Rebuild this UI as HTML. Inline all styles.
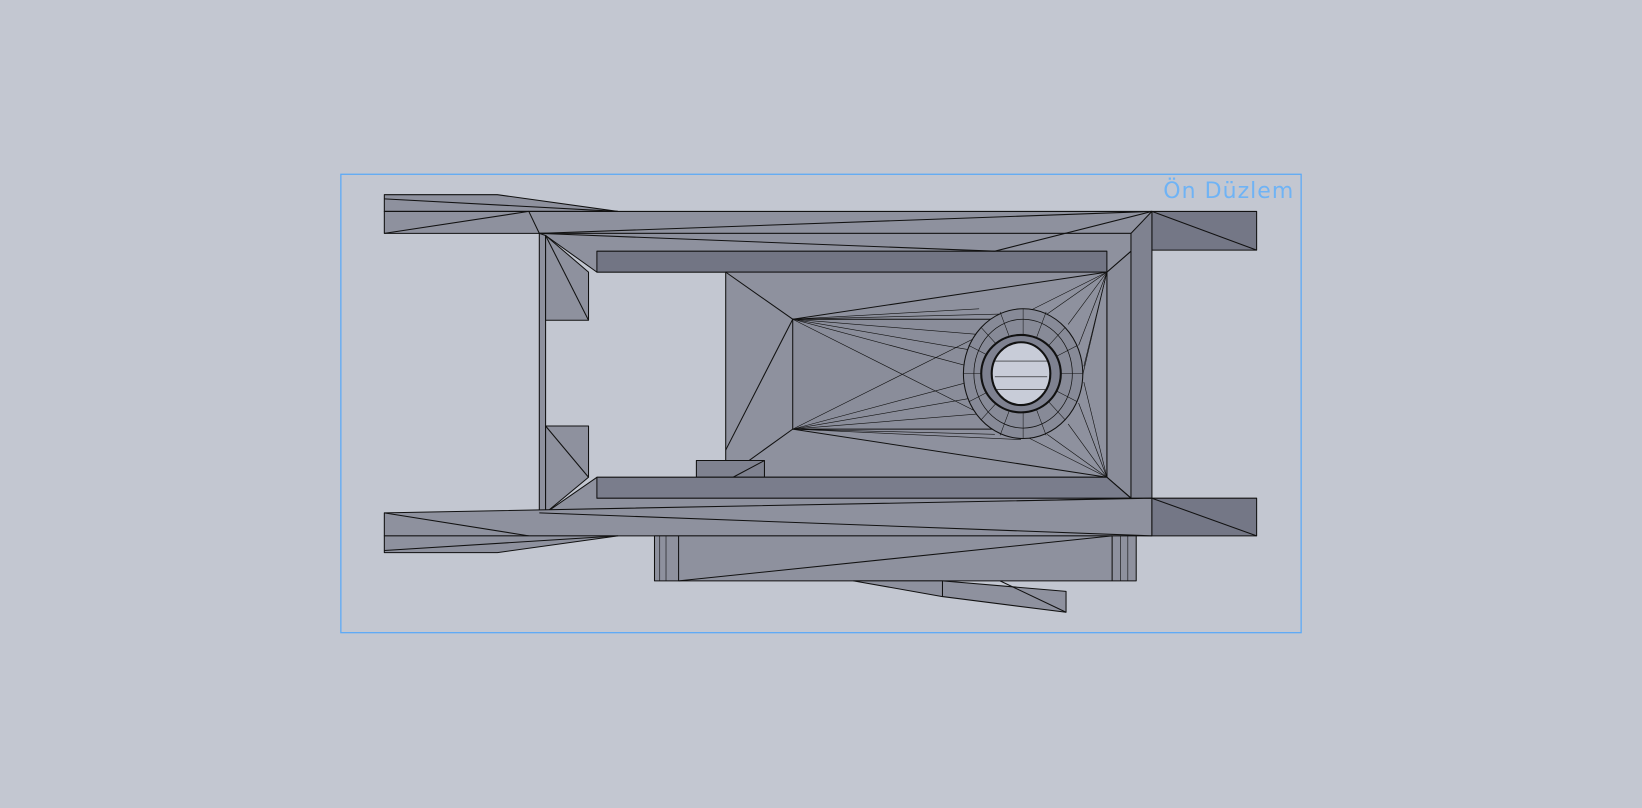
<!DOCTYPE html>
<html><head><meta charset="utf-8"><style>
html,body{margin:0;padding:0;background:#c3c7d1;overflow:hidden}
svg{display:block}
</style></head><body>
<svg width="1642" height="808" viewBox="0 0 1568 772" preserveAspectRatio="none" xmlns="http://www.w3.org/2000/svg">
<rect width="1568" height="772" fill="#c3c7d1"/>
<g stroke="#111" stroke-width="1" stroke-linejoin="round">
<polygon points="367,186 475,186 590,202 367,202" fill="#8e919e"/>
<line x1="367" y1="190" x2="590" y2="202"/>
<polygon points="367,202 1100,202 1100,223 367,223" fill="#8e919e"/>
<polygon points="1100,202 1200,202 1200,239 1100,239" fill="#747786"/>
<line x1="1100" y1="202" x2="1200" y2="239"/>
<line x1="367" y1="223" x2="505" y2="202"/>
<polygon points="1080,223 1100,202 1100,476 1080,476" fill="#7f8290"/>
<polygon points="1057,260 1080,240 1080,476 1057,456" fill="#8a8d9a"/>
<polygon points="515,223 521,223 521,490 515,490" fill="#8e919e"/>
<polygon points="515,223 1080,223 1080,240 1057,260 570,260 521,225" fill="#8e919e"/>
<polygon points="570,240 1057,240 1057,260 570,260" fill="#727584"/>
<line x1="515" y1="223" x2="950" y2="240"/>
<line x1="950" y1="240" x2="1100" y2="202"/>
<line x1="505" y1="202" x2="515" y2="223"/>
<line x1="515" y1="223" x2="1100" y2="202"/>
<polygon points="521,225 562,260 562,306 521,306" fill="#8e919e"/>
<line x1="521" y1="225" x2="562" y2="306"/>
<polygon points="521,407 562,407 562,456 521,490" fill="#8e919e"/>
<line x1="521" y1="407" x2="562" y2="456"/>
<polygon points="693,260 1057,260 1057,456 693,456" fill="#8e919e"/>
<polygon points="757,305 985,305 985,410 757,410" fill="#8a8d9a"/>
<line x1="693" y1="260" x2="757" y2="305"/>
<line x1="693" y1="430" x2="757" y2="305"/>
<line x1="693" y1="456" x2="757" y2="410"/>
<line x1="757" y1="305" x2="1057" y2="260"/>
<line x1="757" y1="410" x2="1057" y2="456"/>
<g stroke-width="0.6">
<line x1="757" y1="305" x2="940" y2="320"/><line x1="757" y1="305" x2="930" y2="335"/><line x1="757" y1="305" x2="925" y2="350"/>
<line x1="757" y1="305" x2="935" y2="295"/><line x1="757" y1="305" x2="960" y2="300"/>
<line x1="757" y1="410" x2="940" y2="395"/><line x1="757" y1="410" x2="930" y2="380"/><line x1="757" y1="410" x2="925" y2="365"/>
<line x1="757" y1="410" x2="950" y2="415"/><line x1="757" y1="410" x2="975" y2="420"/>
<line x1="1057" y1="260" x2="1000" y2="300"/><line x1="1057" y1="260" x2="1020" y2="310"/><line x1="1057" y1="260" x2="1030" y2="330"/><line x1="1057" y1="260" x2="1035" y2="350"/><line x1="1057" y1="260" x2="1030" y2="375"/>
<line x1="1057" y1="456" x2="1000" y2="415"/><line x1="1057" y1="456" x2="1020" y2="405"/><line x1="1057" y1="456" x2="1030" y2="385"/><line x1="1057" y1="456" x2="1035" y2="365"/>
<line x1="757" y1="305" x2="1057" y2="456"/><line x1="757" y1="410" x2="1057" y2="260"/>
</g>
<ellipse cx="977" cy="357" rx="57" ry="62" fill="#878a97"/>
<ellipse cx="977" cy="357" rx="47" ry="52" fill="none" stroke-width="0.7"/>
<g stroke-width="0.5">
<line x1="920" y1="357" x2="1034" y2="357"/><line x1="977" y1="295" x2="977" y2="419"/>
<line x1="937" y1="313" x2="1017" y2="401"/><line x1="1017" y1="313" x2="937" y2="401"/>
<line x1="925" y1="330" x2="1029" y2="384"/><line x1="1029" y1="330" x2="925" y2="384"/>
<line x1="955" y1="298" x2="999" y2="416"/><line x1="999" y1="298" x2="955" y2="416"/>
</g>
<ellipse cx="975" cy="357" rx="38" ry="37" fill="#7e8190" stroke-width="2"/>
<ellipse cx="975" cy="357" rx="28" ry="30" fill="#c8ccd8" stroke-width="2"/>
<line x1="950" y1="345" x2="1000" y2="345" stroke-width="0.6"/>
<line x1="950" y1="360" x2="1000" y2="360" stroke-width="0.6"/>
<line x1="952" y1="372" x2="998" y2="372" stroke-width="0.6"/>
<polygon points="665,440 730,440 730,456 665,456" fill="#7f8290"/>
<line x1="700" y1="456" x2="730" y2="440"/>
<polygon points="521,490 570,456 1057,456 1080,476 1080,490" fill="#8e919e"/>
<polygon points="570,456 1057,456 1080,476 570,476" fill="#7a7d8c"/>
<line x1="515" y1="490" x2="1080" y2="476"/>
<polygon points="367,490 1100,476 1100,512 367,512" fill="#8e919e"/>
<polygon points="1100,476 1200,476 1200,512 1100,512" fill="#747786"/>
<line x1="1100" y1="476" x2="1200" y2="512"/>
<line x1="367" y1="490" x2="505" y2="512"/>
<line x1="515" y1="490" x2="1100" y2="512"/>
<polygon points="367,512 590,512 475,528 367,528" fill="#8e919e"/>
<line x1="367" y1="526" x2="590" y2="512"/>
<polygon points="625,512 1085,512 1085,555 625,555" fill="#8e919e"/>
<line x1="648" y1="512" x2="648" y2="555"/>
<line x1="1062" y1="512" x2="1062" y2="555"/>
<line x1="648" y1="555" x2="1062" y2="512"/>
<g stroke-width="0.6"><line x1="630" y1="512" x2="630" y2="555"/><line x1="636" y1="512" x2="636" y2="555"/><line x1="1070" y1="512" x2="1070" y2="555"/><line x1="1077" y1="512" x2="1077" y2="555"/></g>
<polygon points="815,555 900,555 1018,565 1018,585 900,570" fill="#8e919e"/>
<line x1="900" y1="555" x2="900" y2="570"/>
<line x1="955" y1="555" x2="1018" y2="585"/>
</g>
<rect x="325.5" y="166.5" width="917" height="438" fill="none" stroke="#5aa9f7" stroke-width="1.2"/>
<text x="1236" y="189" text-anchor="end" font-family="DejaVu Sans, sans-serif" font-size="21" fill="#6fb3f5" letter-spacing="1">Ön Düzlem</text>
</svg>
</body></html>
